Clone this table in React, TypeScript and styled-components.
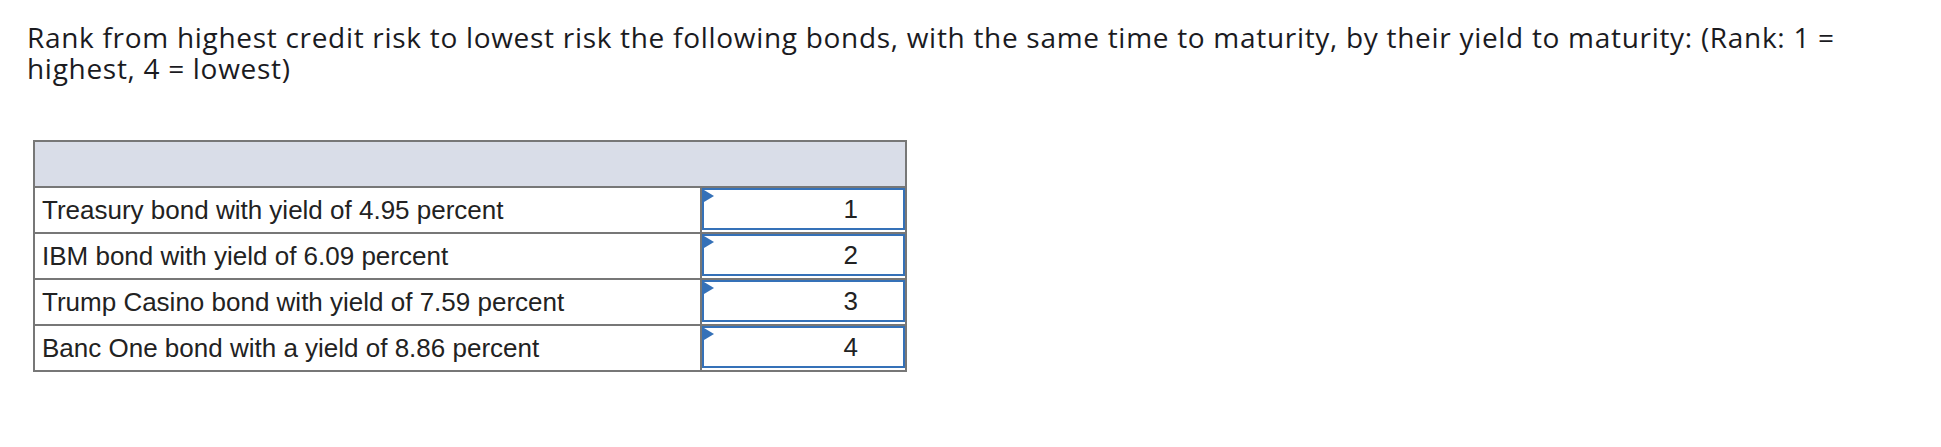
import React from "react";
import styled, { createGlobalStyle } from "styled-components";

const GlobalStyle = createGlobalStyle`
  html, body {
    margin: 0;
    padding: 0;
    background: #ffffff;
  }
`;

const Page = styled.div`
  padding: 22px 27px 0 27px;
  box-sizing: border-box;
  width: 1941px;
`;

const Question = styled.p`
  margin: 0;
  font-family: "Open Sans", "Noto Sans", sans-serif;
  font-size: 28px;
  line-height: 31px;
  letter-spacing: 0.7px;
  color: #1b1b1f;
`;

const Table = styled.div`
  margin: 56px 0 0 6px;
  width: 874px;
  border: 2px solid #777777;
  box-sizing: border-box;
  display: flex;
  flex-direction: column;
`;

const HeaderRow = styled.div`
  height: 44px;
  background: #d9dde8;
  border-bottom: 2px solid #777777;
`;

const Row = styled.div<{ $last?: boolean }>`
  display: grid;
  grid-template-columns: 667px 1fr;
  height: 44px;
  border-bottom: ${(p) => (p.$last ? "none" : "2px solid #777777")};
`;

const LabelCell = styled.div`
  display: flex;
  align-items: center;
  padding-left: 7px;
  border-right: 2px solid #777777;
  font-family: "Liberation Sans", Arial, sans-serif;
  font-size: 26px;
  color: #222222;
  white-space: nowrap;
`;

const RankCell = styled.div`
  padding-bottom: 2px;
  display: flex;
`;

const RankBox = styled.div`
  position: relative;
  flex: 1;
  border: 2px solid #3571b8;
  box-sizing: border-box;
  display: flex;
  align-items: center;
  justify-content: flex-end;
  padding-right: 45px;
  font-family: "Liberation Sans", Arial, sans-serif;
  font-size: 26px;
  color: #222222;
`;

const Marker = styled.span`
  position: absolute;
  top: 0;
  left: 0;
  width: 0;
  height: 0;
  border-left: 10px solid #3571b8;
  border-top: 6px solid transparent;
  border-bottom: 6px solid transparent;
`;

const bonds = [
  { label: "Treasury bond with yield of 4.95 percent", rank: 1 },
  { label: "IBM bond with yield of 6.09 percent", rank: 2 },
  { label: "Trump Casino bond with yield of 7.59 percent", rank: 3 },
  { label: "Banc One bond with a yield of 8.86 percent", rank: 4 },
];

export default function App() {
  return (
    <>
      <GlobalStyle />
      <Page>
        <Question>
          Rank from highest credit risk to lowest risk the following bonds, with the same time to
          maturity, by their yield to maturity: (Rank: 1 = highest, 4 = lowest)
        </Question>
        <Table>
          <HeaderRow />
          {bonds.map((b, i) => (
            <Row key={b.label} $last={i === bonds.length - 1}>
              <LabelCell>{b.label}</LabelCell>
              <RankCell>
                <RankBox>
                  <Marker />
                  {b.rank}
                </RankBox>
              </RankCell>
            </Row>
          ))}
        </Table>
      </Page>
    </>
  );
}
